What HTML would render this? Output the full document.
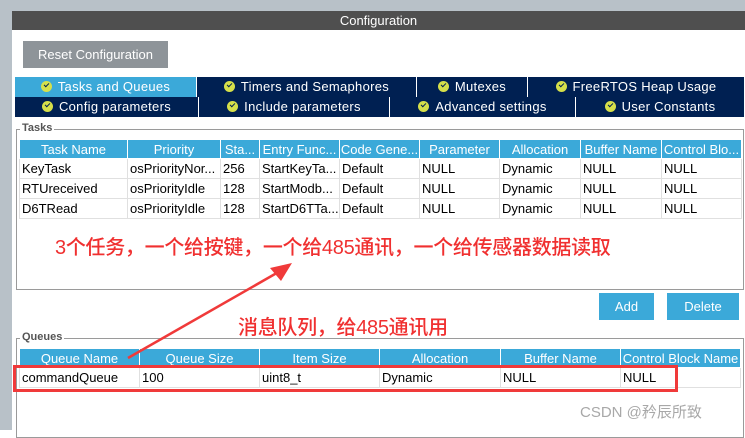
<!DOCTYPE html>
<html><head><meta charset="utf-8"><style>
*{margin:0;padding:0;box-sizing:border-box}
body{width:745px;height:430px;position:relative;background:#fff;font-family:"Liberation Sans","Noto Sans CJK SC",sans-serif;font-size:13px;overflow:hidden;color:#000}
.a{position:absolute}
.tab{position:absolute;height:20px;background:#002052;color:#fff;text-align:center;line-height:20px;font-size:13px;border-right:1px solid #fff;letter-spacing:.3px}
.tab.on{background:#3ba9d9}
.ck{display:inline-block;width:11px;height:11px;border-radius:50%;background:#d6e04a;vertical-align:-1px;margin-right:6px;position:relative}
.ck:after{content:"";position:absolute;left:3px;top:2px;width:4px;height:2px;border-left:1.5px solid #002052;border-bottom:1.5px solid #002052;transform:rotate(-45deg)}
.fs{position:absolute;border:1px solid #9a9a9a}
.lg{position:absolute;background:#fff;font-size:11px;font-weight:bold;color:#555;padding:0 2px}
table{position:absolute;border-collapse:collapse;table-layout:fixed}
td{height:20px;border:1px solid #e0e0e0;padding:0 2px;white-space:nowrap;overflow:hidden;font-size:13px}
th{height:19px;background:#3ba9d9;color:#fff;font-weight:normal;border:1px solid #fff;font-size:13px;white-space:nowrap;overflow:hidden}
.btn{position:absolute;background:#3ba9d9;color:#fff;text-align:center;font-size:13px}
.red{position:absolute;color:#f03030;font-size:20px;white-space:nowrap;font-weight:500;letter-spacing:-0.3px}
</style></head><body>
<div class="a" style="left:0;top:0;width:745px;height:11px;background:#b8c1c8"></div>
<div class="a" style="left:0;top:0;width:12px;height:430px;background:#b8c1c8"></div>
<div class="a" style="left:12px;top:11px;width:733px;height:19px;background:#4f4f4f;color:#fff;text-align:center;line-height:19px;font-size:13px">Configuration</div>
<div class="a" style="left:23px;top:41px;width:145px;height:27px;background:#8e9499;color:#fff;line-height:27px;text-align:center;font-size:13px">Reset Configuration</div>
<div class="tab on" style="left:15px;top:77px;width:182px"><span class="ck"></span>Tasks and Queues</div>
<div class="tab" style="left:197px;top:77px;width:220px"><span class="ck"></span>Timers and Semaphores</div>
<div class="tab" style="left:417px;top:77px;width:111px"><span class="ck"></span>Mutexes</div>
<div class="tab" style="left:528px;top:77px;width:217px"><span class="ck"></span>FreeRTOS Heap Usage</div>
<div class="tab" style="left:15px;top:97px;width:184px"><span class="ck"></span>Config parameters</div>
<div class="tab" style="left:199px;top:97px;width:191px"><span class="ck"></span>Include parameters</div>
<div class="tab" style="left:390px;top:97px;width:186px"><span class="ck"></span>Advanced settings</div>
<div class="tab" style="left:576px;top:97px;width:169px"><span class="ck"></span>User Constants</div>
<div class="fs" style="left:16px;top:129px;width:728px;height:161px"></div>
<div class="lg" style="left:20px;top:122px">Tasks</div>
<table style="left:19px;top:139px;width:722px">
<colgroup><col style="width:108px"><col style="width:93px"><col style="width:39px"><col style="width:80px"><col style="width:80px"><col style="width:80px"><col style="width:81px"><col style="width:81px"><col style="width:80px"></colgroup>
<tr><th>Task Name</th><th>Priority</th><th>Sta...</th><th>Entry Func...</th><th>Code Gene...</th><th>Parameter</th><th>Allocation</th><th>Buffer Name</th><th>Control Blo...</th></tr>
<tr><td>KeyTask</td><td>osPriorityNor...</td><td>256</td><td>StartKeyTa...</td><td>Default</td><td>NULL</td><td>Dynamic</td><td>NULL</td><td>NULL</td></tr>
<tr><td>RTUreceived</td><td>osPriorityIdle</td><td>128</td><td>StartModb...</td><td>Default</td><td>NULL</td><td>Dynamic</td><td>NULL</td><td>NULL</td></tr>
<tr><td>D6TRead</td><td>osPriorityIdle</td><td>128</td><td>StartD6TTa...</td><td>Default</td><td>NULL</td><td>Dynamic</td><td>NULL</td><td>NULL</td></tr>
</table>
<div class="red" style="left:55px;top:231px">3个任务，一个给按键，一个给485通讯，一个给传感器数据读取</div>
<div class="btn" style="left:599px;top:293px;width:55px;height:27px;line-height:27px">Add</div>
<div class="btn" style="left:667px;top:293px;width:72px;height:27px;line-height:27px">Delete</div>
<div class="red" style="left:238px;top:311px">消息队列，给485通讯用</div>
<div class="fs" style="left:16px;top:338px;width:728px;height:100px"></div>
<div class="lg" style="left:20px;top:331px">Queues</div>
<table style="left:19px;top:348px;width:721px">
<colgroup><col style="width:120px"><col style="width:120px"><col style="width:120px"><col style="width:121px"><col style="width:120px"><col style="width:120px"></colgroup>
<tr><th>Queue Name</th><th>Queue Size</th><th>Item Size</th><th>Allocation</th><th>Buffer Name</th><th>Control Block Name</th></tr>
<tr><td>commandQueue</td><td>100</td><td>uint8_t</td><td>Dynamic</td><td>NULL</td><td>NULL</td></tr>
</table>
<div class="a" style="left:13px;top:365px;width:665px;height:27px;border:3px solid #f03a3a"></div>
<svg class="a" style="left:0;top:0" width="745" height="430"><line x1="128" y1="358" x2="282" y2="270" stroke="#f03a3a" stroke-width="2.5"/><polygon points="292,263 270,268 281,281" fill="#f03a3a"/></svg>
<div class="a" style="left:580px;top:401px;color:#a8a8a8;font-size:15px">CSDN @矜辰所致</div>
</body></html>
